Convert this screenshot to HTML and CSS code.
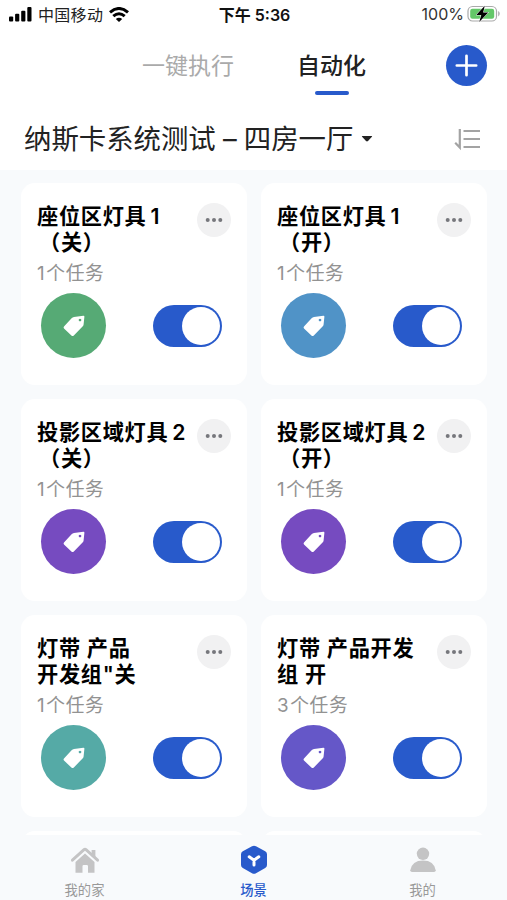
FILE: index.html
```html
<!DOCTYPE html>
<html lang="zh-CN">
<head>
    <meta charset="UTF-8">
    <meta name="viewport" content="width=device-width, initial-scale=1.0">
    <title>场景 - 自动化</title>
    <link rel="stylesheet" href="styles.css">
</head>
<body>

<!-- shared icons -->
<svg class="sprite" width="0" height="0">
    <symbol id="tag" viewBox="0 0 22 22">
        <path fill="#fff" fill-rule="evenodd" d="M11 2 20.4.7Q21.5.6 21.4 1.8L20.6 9.6Q20.5 10.6 19.8 11.3L10.8 20.4Q9.6 21.5 8.4 20.4L1 13.6Q.1 12.6 1 11.6L8.6 3.2Q9.6 2.2 11 2ZM17 3.7a1.3 1.3 0 1 0 .01 0Z"/>
    </symbol>
    <symbol id="dots" viewBox="0 0 34 34">
        <g fill="#76777c"><circle cx="10.7" cy="17" r="2"/><circle cx="17" cy="17" r="2"/><circle cx="23.3" cy="17" r="2"/></g>
    </symbol>
</svg>

<div class="phone">
    <header class="header">
        <div class="status">
            <div class="carrier">
                <svg width="23" height="15" viewBox="0 0 23 15">
                    <rect x="0" y="9.5" width="4.2" height="5" rx="1"/>
                    <rect x="6.1" y="6.8" width="4.2" height="7.7" rx="1"/>
                    <rect x="12.2" y="3.8" width="4.2" height="10.7" rx="1"/>
                    <rect x="18.3" y="0" width="4.2" height="14.5" rx="1"/>
                </svg>
                <span class="operator">中国移动</span>
                <svg width="20" height="15" viewBox="0 0 20 15">
                    <g fill="none" stroke="#000" stroke-width="3">
                        <path d="M1 5.4Q10-2.4 19 5.4"/>
                        <path d="M4.3 9.2Q10 4.3 15.7 9.2"/>
                    </g>
                    <path d="M6.8 12Q10 9.3 13.2 12L10 15Z"/>
                </svg>
            </div>
            <div class="clock">下午 5:36</div>
            <div class="power">
                <span>100%</span>
                <svg width="33" height="18" viewBox="0 0 33 18">
                    <rect x="1" y="1.5" width="28.5" height="14.5" rx="4.6" fill="none" stroke="#aaa" stroke-width="1.2"/>
                    <rect x="3.2" y="3.8" width="24" height="10" rx="2.2" fill="#63c768"/>
                    <path d="M31.2 6v5.4q1.5-.8 1.5-2.7T31.2 6Z" fill="#aaa"/>
                    <path d="M17.8.7 9.2 9.9h5.1L12.2 17 21.3 7.5h-5.2Z" stroke="#fff" stroke-width="1" paint-order="stroke"/>
                </svg>
            </div>
        </div>

        <div class="tabs">
            <div class="tab">一键执行</div>
            <div class="tab active">自动化</div>
            <button class="add">
                <svg width="41" height="41" viewBox="0 0 41 41">
                    <path d="M20.5 10.8v19.4M10.8 20.5h19.4" fill="none" stroke="#fff" stroke-width="2.7" stroke-linecap="round"/>
                </svg>
            </button>
        </div>

        <div class="home">
            <div class="home-name">纳斯卡系统测试<span class="dash">–</span>四房一厅</div>
            <svg class="caret" width="12" height="8" viewBox="0 0 12 8"><path d="M1.4 1h9.2q1 0 .3.8L7 6.1Q6 7 5 6.1L1.1 1.8Q.4 1 1.4 1Z" fill="#222"/></svg>
            <svg class="sort" width="27" height="24" viewBox="0 0 27 24">
                <g fill="none" stroke="#a3a3a3" stroke-width="2.2">
                    <path d="M5.8 2V20.5L1.2 15.8"/>
                    <path d="M9.5 4H26M9.5 12H26M9.5 20H26"/>
                </g>
            </svg>
        </div>
    </header>

    <main class="scenes">
        <div class="card">
            <div class="card-head">
                <h2>座位区灯具<i>1</i><br><span class="state">（关）</span></h2>
                <svg class="more"><use href="#dots"/></svg>
            </div>
            <p class="tasks"><i>1</i>个任务</p>
            <div class="card-foot">
                <div class="badge green"><svg width="22" height="22"><use href="#tag"/></svg></div>
                <div class="switch"></div>
            </div>
        </div>

        <div class="card">
            <div class="card-head">
                <h2>座位区灯具<i>1</i><br><span class="state">（开）</span></h2>
                <svg class="more"><use href="#dots"/></svg>
            </div>
            <p class="tasks"><i>1</i>个任务</p>
            <div class="card-foot">
                <div class="badge blue"><svg width="22" height="22"><use href="#tag"/></svg></div>
                <div class="switch"></div>
            </div>
        </div>

        <div class="card">
            <div class="card-head">
                <h2>投影区域灯具<i>2</i><br><span class="state">（关）</span></h2>
                <svg class="more"><use href="#dots"/></svg>
            </div>
            <p class="tasks"><i>1</i>个任务</p>
            <div class="card-foot">
                <div class="badge purple"><svg width="22" height="22"><use href="#tag"/></svg></div>
                <div class="switch"></div>
            </div>
        </div>

        <div class="card">
            <div class="card-head">
                <h2>投影区域灯具<i>2</i><br><span class="state">（开）</span></h2>
                <svg class="more"><use href="#dots"/></svg>
            </div>
            <p class="tasks"><i>1</i>个任务</p>
            <div class="card-foot">
                <div class="badge purple"><svg width="22" height="22"><use href="#tag"/></svg></div>
                <div class="switch"></div>
            </div>
        </div>

        <div class="card">
            <div class="card-head">
                <h2>灯带 产品<br>开发组"关</h2>
                <svg class="more"><use href="#dots"/></svg>
            </div>
            <p class="tasks"><i>1</i>个任务</p>
            <div class="card-foot">
                <div class="badge teal"><svg width="22" height="22"><use href="#tag"/></svg></div>
                <div class="switch"></div>
            </div>
        </div>

        <div class="card">
            <div class="card-head">
                <h2>灯带 产品开发<br>组 开</h2>
                <svg class="more"><use href="#dots"/></svg>
            </div>
            <p class="tasks"><i>3</i>个任务</p>
            <div class="card-foot">
                <div class="badge indigo"><svg width="22" height="22"><use href="#tag"/></svg></div>
                <div class="switch"></div>
            </div>
        </div>

        <!-- next row, cut off by the nav -->
        <div class="card"></div>
        <div class="card"></div>
    </main>

    <nav class="nav">
        <div class="nav-item">
            <svg width="30" height="30" viewBox="0 0 30 30">
                <path d="M2.4 15.2 14 4.7Q15 3.8 16 4.7L27.6 15.2" fill="none" stroke="#c4c4c5" stroke-width="2.9" stroke-linecap="round"/>
                <path d="M21.6 5h3.8v8.2L21.6 9.8ZM5.5 17 15 8.4l9.5 8.6V27.7H18v-6.4q0-1.2-1.2-1.2h-3.1q-1.2 0-1.2 1.2v6.4h-7Z" fill="#c4c4c5"/>
            </svg>
            <span>我的家</span>
        </div>
        <div class="nav-item current">
            <svg width="30" height="30" viewBox="0 0 30 30">
                <path d="M13 1.3Q15 .2 17 1.3L26.2 6.2Q28 7.2 28 9.2V20Q28 22 26.2 23L17 28.3Q15 29.4 13 28.3L3.8 23Q2 22 2 20V9.2Q2 7.2 3.8 6.2Z" fill="#285acb"/>
                <path d="M10.2 11.8 15 15.2 19.8 11.8M15 15.2V20" fill="none" stroke="#fff" stroke-width="3" stroke-linecap="round" stroke-linejoin="round"/>
            </svg>
            <span>场景</span>
        </div>
        <div class="nav-item">
            <svg width="30" height="30" viewBox="0 0 30 30">
                <g fill="#c4c4c5">
                    <circle cx="15" cy="8.8" r="6.2"/>
                    <path d="M2.3 25.2Q4 15.4 15 15.4T27.7 25.2Q27.7 27 26 27H4Q2.3 27 2.3 25.2Z"/>
                </g>
            </svg>
            <span>我的</span>
        </div>
    </nav>
</div>

</body>
</html>
```

FILE: styles.css
```css
* {
    box-sizing: border-box;
}
body {
    margin: 0;
    font-family: "Inter", "Noto Sans CJK SC", sans-serif;
    color: #111;
    background-color: #f8fafc;
}
svg {
    display: block;
    flex: none;
}
i {
    font-style: normal;
}
.sprite {
    position: absolute;
}
.phone {
    display: flex;
    flex-direction: column;
    height: 900px;
    overflow: hidden;
}

/* header */
.header {
    flex: none;
    height: 170px;
    background-color: #fff;
}
.status {
    display: grid;
    grid-template-columns: 1fr auto 1fr;
    align-items: center;
    height: 28px;
    padding: 0 7px 0 9px;
    font-size: 16px;
}
.carrier, .power {
    display: flex;
    align-items: center;
}
.carrier {
    gap: 6px;
}
.operator {
    font-size: 16px;
    letter-spacing: 0.3px;
    color: #222;
}
.clock {
    font-weight: 600;
}
.power {
    justify-content: flex-end;
    gap: 3px;
    color: #333;
}
.tabs {
    display: flex;
    height: 74px;
    padding: 17px 20px 0 142px;
    font-size: 23px;
    line-height: 42px;
}
.tab {
    color: #aaa;
}
.tab.active {
    display: flex;
    flex-direction: column;
    align-items: center;
    margin-left: 63px;
    color: #222;
    font-weight: 500;
}
.tab.active::after {
    content: "";
    width: 34px;
    height: 4px;
    margin-top: 4px;
    border-radius: 2px;
    background-color: #285acb;
}
.add {
    width: 41px;
    height: 41px;
    margin: 0 0 0 auto;
    padding: 0;
    border: none;
    border-radius: 50%;
    background-color: #285acb;
}
.home {
    display: flex;
    align-items: center;
    height: 74px;
    padding: 0 26px 0 24px;
}
.home-name {
    font-size: 27.4px;
    line-height: 40px;
    color: #222;
    white-space: nowrap;
}
.dash {
    display: inline-block;
    width: 28px;
    text-align: center;
}
.caret {
    margin-left: 8px;
}
.sort {
    margin-left: auto;
}

/* scene cards */
.scenes {
    display: grid;
    grid-template-columns: 1fr 1fr;
    grid-auto-rows: 202px;
    gap: 14px;
    flex: 1;
    min-height: 0;
    padding: 13px 20px 0 21px;
    overflow: hidden;
}
.card {
    padding: 20px 16px 0;
    border-radius: 14px;
    background-color: #fff;
}
.card-head {
    display: flex;
    justify-content: space-between;
}
.card h2 {
    margin: 0;
    font-size: 21.2px;
    font-weight: 600;
    line-height: 26px;
    letter-spacing: 0.7px;
    color: #000;
    white-space: nowrap;
}
.card h2 i {
    margin-left: 4px;
}
.state {
    padding-left: 2px;
}
.more {
    width: 34px;
    height: 34px;
    margin-left: -12px;
    border-radius: 50%;
    background-color: #f1f1f2;
}
.tasks {
    margin: 6px 0;
    font-size: 18.8px;
    line-height: 26px;
    letter-spacing: 0.6px;
    color: #929292;
}
.tasks i {
    margin-right: 1px;
}
.card-foot {
    display: flex;
    align-items: center;
    justify-content: space-between;
    padding: 0 9px 0 4px;
}
.badge {
    display: flex;
    align-items: center;
    justify-content: center;
    width: 65px;
    height: 65px;
    border-radius: 50%;
}
.green { background-color: #56aa75; }
.blue { background-color: #5093c7; }
.purple { background-color: #764bc0; }
.teal { background-color: #55aaa6; }
.indigo { background-color: #6557c8; }
.switch {
    display: flex;
    justify-content: flex-end;
    width: 69px;
    height: 42px;
    padding: 2px;
    border-radius: 21px;
    background-color: #285acb;
}
.switch::after {
    content: "";
    width: 38px;
    height: 38px;
    border-radius: 50%;
    background-color: #fff;
}

/* bottom nav */
.nav {
    display: flex;
    flex: none;
    height: 65px;
    background-color: #f8fafc;
}
.nav-item {
    display: flex;
    flex: 1;
    flex-direction: column;
    align-items: center;
    padding-top: 10px;
    font-size: 13.3px;
    line-height: 20px;
    color: #999;
}
.nav-item span {
    margin-top: 5px;
}
.nav-item.current {
    color: #285acb;
    font-weight: 500;
}
```
